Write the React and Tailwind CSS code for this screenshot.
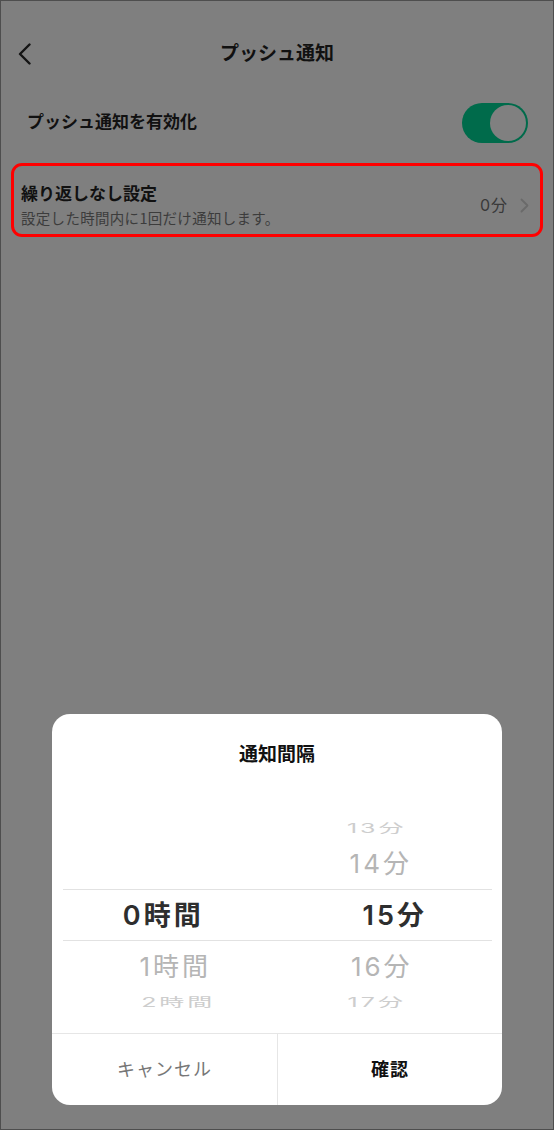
import { useState } from "react";

const font = { fontFamily: 'Inter, "Noto Sans CJK JP", sans-serif' };

// Picker rows: left column (hours), right column (minutes)
const rows = [
  { h: "h-[36px]", left: null, right: "13分", tone: "far", lx: "", rx: "-translate-x-[8px]" },
  { h: "h-[36px]", left: null, right: "14分", tone: "near", lx: "", rx: "-translate-x-[4px]" },
];
const rowsBelow = [
  { h: "h-[52px]", left: "1時間", right: "16分", tone: "near", lx: "translate-x-[5px]", rx: "-translate-x-[3px]" },
  { h: "h-[18px]", left: "2時間", right: "17分", tone: "far", lx: "translate-x-[8px]", rx: "-translate-x-[8px]" },
];

const toneClass = {
  near: "text-[26px] leading-none tracking-[3px] text-[#b5b5b5]",
  far: "text-[25px] leading-[14px] tracking-[3px] text-[#cdcdcd] scale-y-[0.5]",
};

const PickerRow = ({ row }) => (
  <div className={`grid grid-cols-2 items-center shrink-0 ${row.h}`}>
    <div className={`text-center ${toneClass[row.tone]} ${row.lx}`}>
      {row.left}
    </div>
    <div className={`text-center ${toneClass[row.tone]} ${row.rx}`}>
      {row.right}
    </div>
  </div>
);

const App = () => {
  const [enabled] = useState(true);

  return (
    <div
      className="relative w-[554px] h-[1130px] overflow-hidden bg-[#7f7f7f] border border-[#4e4e4e] flex flex-col"
      style={font}
    >
      {/* Header */}
      <div className="mt-[31px] h-[44px] flex items-center pl-[17px] pr-[17px]">
        <svg width="13" height="22" viewBox="0 0 13 22" fill="none">
          <path
            d="M11.5 1.5 L2 11 L11.5 20.5"
            stroke="#141414"
            strokeWidth="2.4"
            strokeLinecap="round"
            strokeLinejoin="round"
          />
        </svg>
        <h1 className="flex-1 text-center text-[19px] font-bold text-[#111]">
          プッシュ通知
        </h1>
        <div className="w-[13px]" />
      </div>

      {/* Enable toggle */}
      <div className="mt-[27px] h-[40px] flex items-center justify-between pl-[26px] pr-[25px]">
        <span className="text-[17px] font-semibold text-[#111]">
          プッシュ通知を有効化
        </span>
        <div
          className={`w-[66px] h-[40px] rounded-full p-[2px] flex ${
            enabled ? "bg-[#006b4b] justify-end" : "bg-[#666] justify-start"
          }`}
        >
          <div className="w-[36px] h-[36px] rounded-full bg-[#808080]" />
        </div>
      </div>

      {/* Repeat setting row */}
      <div className="mt-[20px] mx-[10px] h-[74px] rounded-[11px] border-[3px] border-[#ff0000] flex justify-between pl-[7px] pr-[11px]">
        <div className="flex flex-col pt-[16px]">
          <span className="text-[17px] leading-[24px] font-bold text-[#111]">
            繰り返しなし設定
          </span>
          <span
            className="mt-[2px] text-[14.5px] tracking-[0.3px] leading-[20px] text-[#3c3c3c]"
            style={{ fontFamily: '"Noto Sans CJK JP", sans-serif' }}
          >
            設定した時間内に1回だけ通知します。
          </span>
        </div>
        <div className="flex items-center gap-[12px] pt-[10px]">
          <span className="text-[16px] tracking-[1px] text-[#393939]">0分</span>
          <svg width="9" height="15" viewBox="0 0 9 15" fill="none">
            <path
              d="M1.5 1.5 L7.5 7.5 L1.5 13.5"
              stroke="#6a6a6a"
              strokeWidth="1.8"
              strokeLinecap="round"
              strokeLinejoin="round"
            />
          </svg>
        </div>
      </div>

      {/* Interval picker dialog */}
      <div className="absolute left-[51px] top-[713px] w-[450px] h-[391px] bg-white rounded-[18px] flex flex-col overflow-hidden">
        <div className="h-[96px] shrink-0 pt-[29px] text-center text-[19px] leading-[24px] font-semibold text-[#111]">
          通知間隔
        </div>

        <div className="ml-[11px] mr-[10px] h-[201px] shrink-0 overflow-hidden flex flex-col">
          {rows.map((row) => (
            <PickerRow key={row.right} row={row} />
          ))}
          <div className="h-[7px] shrink-0" />
          <div className="grid grid-cols-2 items-center h-[52px] shrink-0 border-y border-[#e2e2e2]">
            <div className="text-center text-[27px] tracking-[3px] leading-none font-semibold text-[#2e2e2e] -translate-x-[7px]">
              0時間
            </div>
            <div className="text-center text-[27px] tracking-[3px] leading-none font-semibold text-[#2e2e2e] translate-x-[10px]">
              15分
            </div>
          </div>
          {rowsBelow.map((row) => (
            <PickerRow key={row.right} row={row} />
          ))}
        </div>

        <div className="mt-auto h-[72px] grid grid-cols-2 border-t border-[#e6e6e6]">
          <button className="flex items-center justify-center text-[18px] tracking-[1px] text-[#777]">
            キャンセル
          </button>
          <button className="flex items-center justify-center text-[18px] tracking-[1px] font-bold text-[#111] border-l border-[#e6e6e6]">
            確認
          </button>
        </div>
      </div>
    </div>
  );
};

export default App;
